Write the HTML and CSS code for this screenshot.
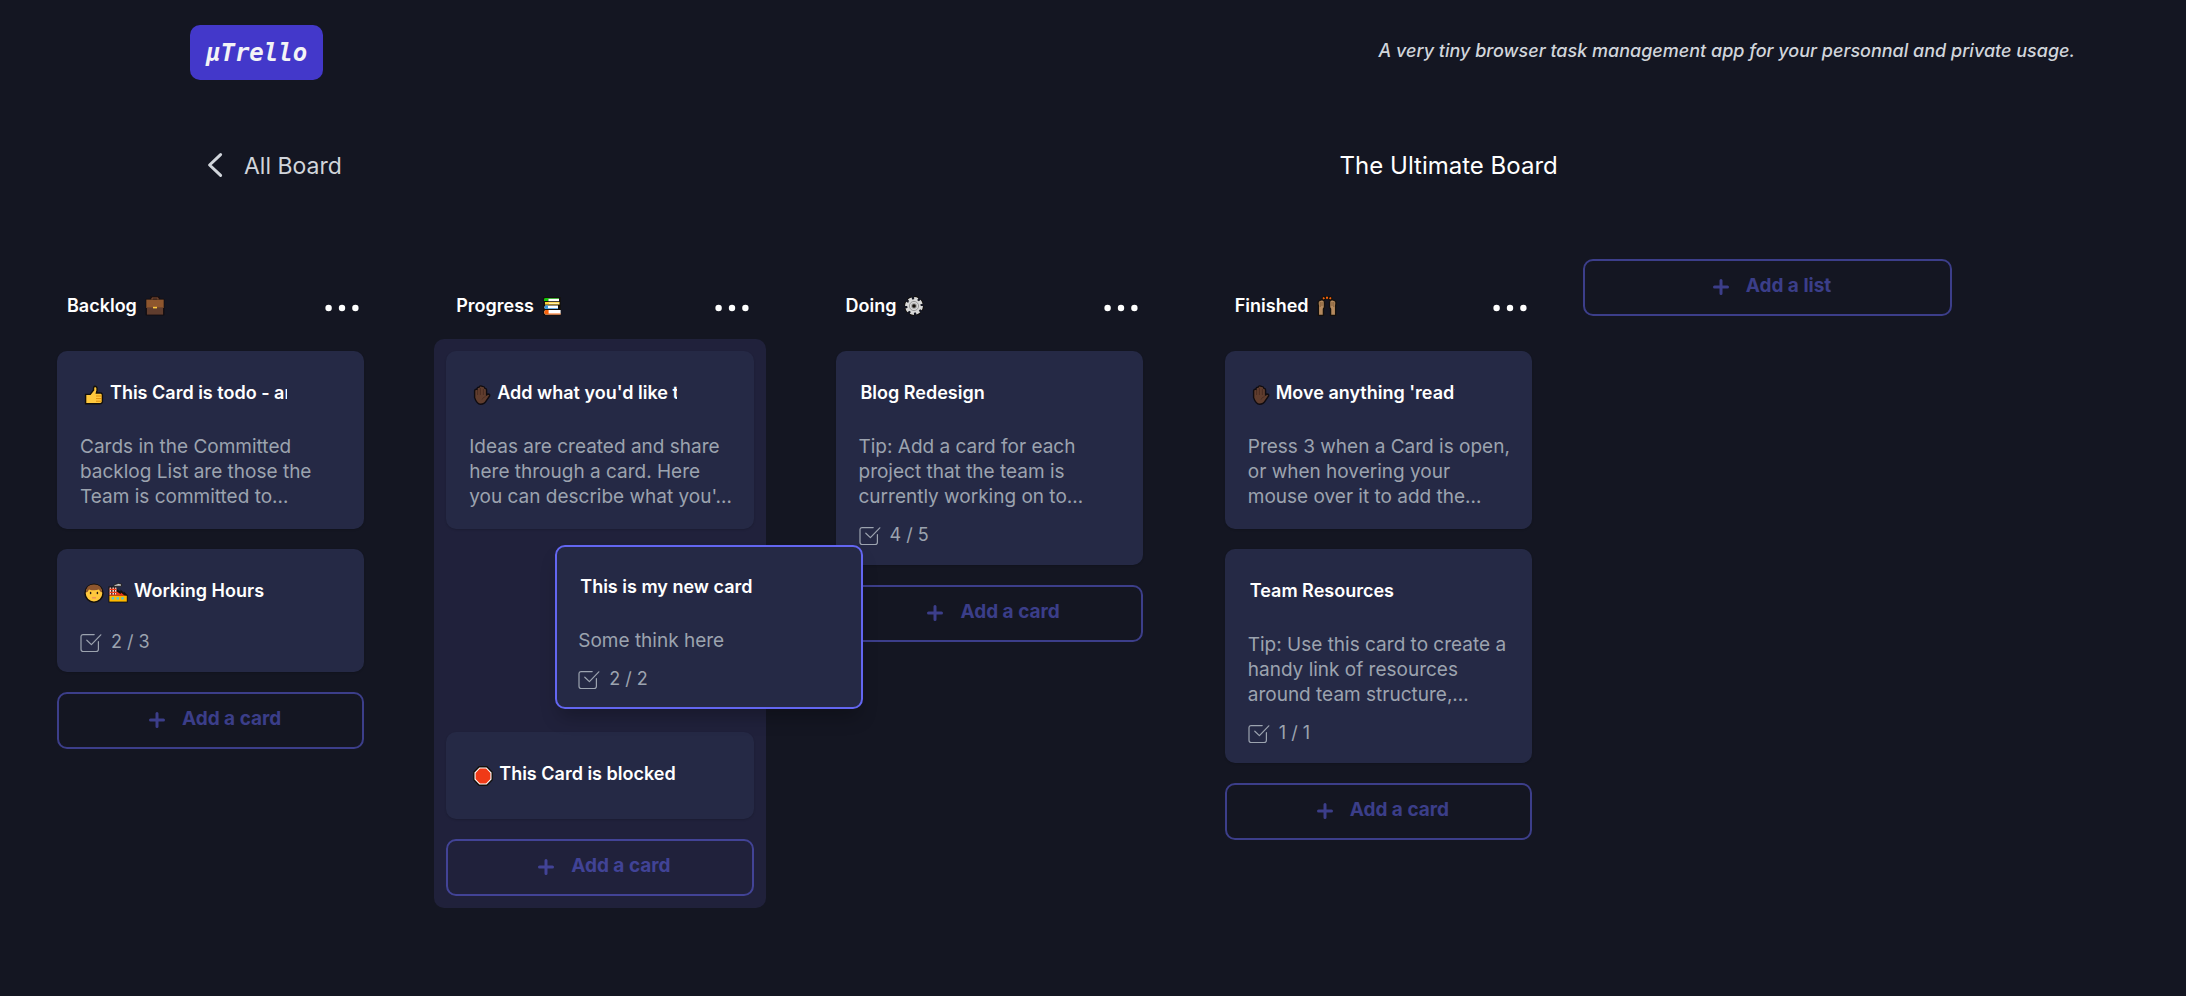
FILE: index.html
```html
<!DOCTYPE html>
<html lang="en">
<head>
<meta charset="utf-8">
<meta name="viewport" content="width=device-width, initial-scale=1">
<title>µTrello</title>
<link rel="stylesheet" href="styles.css">
</head>
<body>
<svg class="defs" aria-hidden="true">
  <symbol id="dots" viewBox="0 0 34 8"><circle cx="3.6" cy="4" r="3.2"/><circle cx="17" cy="4" r="3.2"/><circle cx="30.4" cy="4" r="3.2"/></symbol>
  <symbol id="plus" viewBox="0 0 16 16"><path d="M8 1.5v13M1.5 8h13" fill="none" stroke="currentColor" stroke-width="3" stroke-linecap="round"/></symbol>
  <symbol id="check" viewBox="0 0 22 20"><path d="M14.2 1.6H3.2Q1 1.6 1 3.8V16.3Q1 18.5 3.2 18.5H16.2Q18.4 18.5 18.4 16.3V8.7M6.8 7.2l4.6 4.4L20.8 1.8" fill="none" stroke="currentColor" stroke-width="1.2" stroke-linecap="round" stroke-linejoin="round"/></symbol>
  <symbol id="hand" viewBox="0 0 18 20"><path d="M1.6 12.6V5.4Q2.2 3.8 4 4.4Q4 2 6 2.2Q7.4 0 9.4 1.4Q11.6 1.4 12 3.4Q13.6 3.4 13.6 5.4v4.4l1.6-.8Q17 9 16.6 11l-3.2 4.6Q11.4 19.2 7.6 19.2T1.6 12.6z" fill="#603d2e" stroke="#100c10" stroke-width="1.4"/><path d="M4.6 5v5M7.4 3v7M10.4 4v6M9 14.6q1-2.6 3.6-3" fill="none" stroke="#452a20" stroke-width=".8"/></symbol>
</svg>

<header class="topbar">
  <a class="logo" href="#">µTrello</a>
  <p class="tagline">A very tiny browser task management app for your personnal and private usage.</p>
</header>

<nav class="boardbar">
  <a class="back" href="#">
    <svg class="chevron" viewBox="0 0 16 26" aria-hidden="true"><path d="M13.6 2.6L2.6 13L13.6 23.4" fill="none" stroke="currentColor" stroke-width="3" stroke-linecap="round" stroke-linejoin="round"/></svg>
    All Board
  </a>
  <h1 class="board-title">The Ultimate Board</h1>
</nav>

<main class="board">
  <div class="lists">
    <section class="list">
      <header class="list-head">
        <h2 class="list-title">Backlog
          <svg class="emoji" viewBox="0 0 20 20" role="img" aria-label="briefcase"><path d="M6.5 4V1.5h7V4" fill="none" stroke="#1b1110" stroke-width="2.6"/><rect x=".6" y="2.8" width="18.8" height="16.6" rx="1" fill="#100c10"/><path d="M7 3.6V2h6v1.6" fill="none" stroke="#8b5334"/><rect x="1.3" y="3.6" width="17.4" height="8.4" fill="#8e562e"/><rect x="1.9" y="11.4" width="16.2" height="7.2" fill="#603d2e"/><rect x="8" y="10.8" width="4" height="1.6" fill="#ffc83d"/></svg>
        </h2>
        <button class="menu" type="button" aria-label="Backlog menu"><svg class="dots"><use href="#dots"/></svg></button>
      </header>
      <div class="cards">
        <article class="card">
          <div class="card-head">
            <svg class="emoji" viewBox="0 0 20 20" role="img" aria-label="thumbs up"><path d="M1.6 9.4h4.6L9.6 5Q9.2 1.2 11 1.2Q13.6 1.6 13 5.4L12.4 8H17q1.6.6 1.4 2.2V17q-.6 1.8-2.4 1.8H1.6z" fill="#ffc83d" stroke="#14100c" stroke-width="1.4"/><path d="M12 11h6M12 13.6h6M12 16.2h5.4" stroke="#d67d00" stroke-width=".8"/></svg>
            <input class="card-title" aria-label="Card title" value="This Card is todo - and ready">
          </div>
          <p class="desc">Cards in the Committed<br>backlog List are those the<br>Team is committed to…</p>
        </article>
        <article class="card">
          <div class="card-head">
            <svg class="emoji" viewBox="0 0 20 20" role="img" aria-label="man"><circle cx="10" cy="10.2" r="9" fill="#ffc83d" stroke="#14100c" stroke-width="1.5"/><path d="M1.8 9.6Q2 1.4 10 1.4T18.2 9.6Q16 9 15 6.6Q10 8 5 6.4Q4 9 1.8 9.6z" fill="#8e562e"/><ellipse cx="6.6" cy="10" rx=".8" ry="1.2" fill="#2a1c14"/><ellipse cx="13.4" cy="10" rx=".8" ry="1.2" fill="#2a1c14"/><path d="M8 14.8h4" fill="none" stroke="#f08a5c" stroke-width="1.3"/></svg>
            <svg class="emoji" viewBox="0 0 20 20" role="img" aria-label="factory"><path d="M.5 3.6h8V6l4 2.6V6.4l3.4 3.4V8.6l3.8 3.6V19.4H.5z" fill="#14100c"/><path d="M5.8 3.4Q5.6 1 8.2 1.2Q10-.2 13.4 1V3.2H9z" fill="#cfcfcf" stroke="#14100c" stroke-width=".8"/><path d="M2.4 4.4V12M5.2 4.4V12M7.6 4.4V12" stroke="#ffd6d0" stroke-width="1.6"/><path d="M1.6 6.4h6.8M1.6 9.4h6.8" stroke="#f03a17" stroke-width="1.2"/><path d="M1.4 12.8V11.4h7V8.2l4.4 3V9.4l3.4 2.8 2.6.6z" fill="#f03a17"/><rect x="1.4" y="12.8" width="17.4" height="5.8" fill="#ffb900"/><path d="M3.6 15.4h2.6M8.4 15.4h2.6M13.2 15.4h2.6" stroke="#50c8d8" stroke-width="2.4"/></svg>
            <input class="card-title" aria-label="Card title" value="Working Hours">
          </div>
          <p class="progress"><svg class="check"><use href="#check"/></svg>2 / 3</p>
        </article>
        <button class="add" type="button"><svg class="plus"><use href="#plus"/></svg>Add a card</button>
      </div>
    </section>

    <section class="list">
      <header class="list-head">
        <h2 class="list-title">Progress
          <svg class="emoji" viewBox="0 0 20 20" role="img" aria-label="books"><path d="M1.4 1h17.2v18.4H1z" fill="#14100c"/><path d="M2 5V3.2Q2 2 3.6 2H17v.8H6.4V5z" fill="#16c60c"/><path d="M6.4 2.8H17V5.2H6.4z" fill="#fff"/><path d="M3 6h14.6v2.6H3z" fill="#ffd23c"/><path d="M7 6.8h10v1H7z" fill="#fff6c8"/><path d="M6 9.4H3.4q-2 1.8 0 3.6H16V9.4z" fill="#fff"/><path d="M6 9.4H3.4q-2 1.8 0 3.6H16v-.8H6z" fill="#3a96dd"/><path d="M6 14H3.4q-2.4 2.2 0 4.6H18.6V14z" fill="#fff"/><path d="M6.6 14H3.4q-2.4 2.2 0 4.6H18.6v-1.2H6.6z" fill="#f7630c"/></svg>
        </h2>
        <button class="menu" type="button" aria-label="Progress menu"><svg class="dots"><use href="#dots"/></svg></button>
      </header>
      <div class="cards is-over">
        <article class="card">
          <div class="card-head">
            <svg class="emoji hand" role="img" aria-label="raised hand"><use href="#hand"/></svg>
            <input class="card-title" aria-label="Card title" value="Add what you'd like to do">
          </div>
          <p class="desc">Ideas are created and share<br>here through a card. Here<br>you can describe what you'…</p>
        </article>
        <div class="slot">
          <article class="card is-dragged">
            <div class="card-head">
              <input class="card-title" aria-label="Card title" value="This is my new card">
            </div>
            <p class="desc">Some think here</p>
            <p class="progress"><svg class="check"><use href="#check"/></svg>2 / 2</p>
          </article>
        </div>
        <article class="card">
          <div class="card-head">
            <svg class="emoji" viewBox="0 0 20 20" role="img" aria-label="stop sign"><path d="M6.2.8h7.6l5.4 5.4v7.6l-5.4 5.4H6.2L.8 13.8V6.2z" fill="#fff" stroke="#14100c" stroke-width="1.4"/><path d="M6.9 2.6h6.2l4.3 4.3v6.2l-4.3 4.3H6.9l-4.3-4.3V6.9z" fill="#f03a17"/></svg>
            <input class="card-title" aria-label="Card title" value="This Card is blocked">
          </div>
        </article>
        <button class="add" type="button"><svg class="plus"><use href="#plus"/></svg>Add a card</button>
      </div>
    </section>

    <section class="list">
      <header class="list-head">
        <h2 class="list-title">Doing
          <svg class="emoji" viewBox="0 0 20 20" role="img" aria-label="gear"><circle cx="10" cy="10" r="7.4" fill="none" stroke="#14100c" stroke-width="5" stroke-dasharray="3.6 2.2"/><circle cx="10" cy="10" r="7.4" fill="none" stroke="#d8d8d8" stroke-width="3" stroke-dasharray="3.6 2.2"/><circle cx="10" cy="10" r="6.8" fill="#d8d8d8"/><circle cx="10" cy="10" r="4.6" fill="none" stroke="#8a8a8a" stroke-width=".8"/><circle cx="10" cy="10" r="2.8" fill="#9a9a9a"/><circle cx="10" cy="10" r="1.8" fill="#14100c"/></svg>
        </h2>
        <button class="menu" type="button" aria-label="Doing menu"><svg class="dots"><use href="#dots"/></svg></button>
      </header>
      <div class="cards">
        <article class="card">
          <div class="card-head">
            <input class="card-title" aria-label="Card title" value="Blog Redesign">
          </div>
          <p class="desc">Tip: Add a card for each<br>project that the team is<br>currently working on to…</p>
          <p class="progress"><svg class="check"><use href="#check"/></svg>4 / 5</p>
        </article>
        <button class="add" type="button"><svg class="plus"><use href="#plus"/></svg>Add a card</button>
      </div>
    </section>

    <section class="list">
      <header class="list-head">
        <h2 class="list-title">Finished
          <svg class="emoji" viewBox="0 0 20 20" role="img" aria-label="raising hands"><path id="arm" d="M1.4 19.4V10Q.4 5 2.4 4.6L4 3.8Q7.6 3.4 7.4 7v4.4L6.4 13v6.4z" fill="#b58a5e" stroke="#14100c" stroke-width="1.3"/><use href="#arm" transform="matrix(-1 0 0 1 20 0)"/><path d="M3.2 6v5M5 6v4M16.8 6v5M15 6v4" stroke="#7a5534" stroke-width=".8"/><path d="M5.4 3.2Q10-1 14.6 3.2" fill="none" stroke="#14100c" stroke-width="3.4"/><path d="M6 2.8l1.4-1M9 1.8h2M12.6 1.8l1.4 1" stroke="#f7630c" stroke-width="2"/></svg>
        </h2>
        <button class="menu" type="button" aria-label="Finished menu"><svg class="dots"><use href="#dots"/></svg></button>
      </header>
      <div class="cards">
        <article class="card">
          <div class="card-head">
            <svg class="emoji hand" role="img" aria-label="raised hand"><use href="#hand"/></svg>
            <input class="card-title" aria-label="Card title" value="Move anything 'ready' here">
          </div>
          <p class="desc">Press 3 when a Card is open,<br>or when hovering your<br>mouse over it to add the…</p>
        </article>
        <article class="card">
          <div class="card-head">
            <input class="card-title" aria-label="Card title" value="Team Resources">
          </div>
          <p class="desc">Tip: Use this card to create a<br>handy link of resources<br>around team structure,…</p>
          <p class="progress"><svg class="check"><use href="#check"/></svg>1 / 1</p>
        </article>
        <button class="add" type="button"><svg class="plus"><use href="#plus"/></svg>Add a card</button>
      </div>
    </section>
  </div>
  <button class="add" type="button"><svg class="plus"><use href="#plus"/></svg>Add a list</button>
</main>
</body>
</html>
```
FILE: styles.css
```css
* {
  box-sizing: border-box;
}

body {
  margin: 0;
  min-height: 100vh;
  background: #141622;
  color: #fff;
  font-family: Inter, "Liberation Sans", sans-serif;
  font-size: 18px;
  line-height: 25px;
}

h1,
h2,
p {
  margin: 0;
}

a {
  color: inherit;
  text-decoration: none;
}

button,
input {
  font: inherit;
}

.defs {
  display: none;
}

.topbar {
  display: flex;
  align-items: center;
  justify-content: space-between;
  padding: 25px 111px 0 190px;
}

.logo {
  display: flex;
  align-items: center;
  height: 55px;
  padding: 0 16px;
  border-radius: 10px;
  background: #4338ca;
  color: #f3f4f6;
  font: italic bold 24px "DejaVu Sans Mono", monospace;
}

.tagline {
  padding-bottom: 4px;
  color: #d1d5db;
  font-style: italic;
  font-weight: 500;
}

.boardbar {
  display: grid;
  grid-template-columns: 1fr 2fr;
  align-items: center;
  padding: 68px 108px 0 190px;
  font-size: 23px;
  line-height: 36px;
}

.back {
  display: flex;
  align-items: center;
  gap: 21px;
  padding-left: 17px;
  color: #d1d5db;
}

.chevron {
  width: 16px;
  height: 26px;
  margin-bottom: 2px;
}

.board-title {
  font-size: 24px;
  font-weight: 400;
  text-align: center;
}

.board {
  display: grid;
  grid-template-columns: minmax(0, 1499fr) minmax(0, 369fr);
  align-items: start;
  gap: 39px;
  padding: 75px 234px 40px 45px;
}

.lists {
  display: grid;
  grid-template-columns: repeat(4, minmax(0, 1fr));
  align-items: start;
  gap: 58px;
  padding-top: 28px;
}

.list-head {
  display: flex;
  align-items: center;
  justify-content: space-between;
  height: 40px;
  padding: 0 17px 3px 22px;
}

.list-title {
  display: flex;
  align-items: center;
  gap: 8px;
  font-size: 18px;
  font-weight: 600;
}

.emoji {
  flex: none;
  width: 20px;
  height: 20px;
}

.emoji.hand {
  width: 18px;
}

.menu {
  display: flex;
  padding: 4px 0 0;
  border: 0;
  background: none;
  color: #fff;
}

.dots {
  width: 34px;
  height: 8px;
  fill: currentColor;
}

.cards {
  display: flex;
  flex-direction: column;
  gap: 20px;
  margin-top: 12px;
  padding: 12px;
  border-radius: 10px;
}

.cards.is-over {
  background: #20213b;
}

.card {
  padding: 20px 23px;
  border-radius: 10px;
  background: #252945;
  box-shadow: 0 1px 2px rgba(0, 0, 0, 0.15);
}

.card-head {
  display: flex;
  align-items: center;
  gap: 4px;
  height: 47px;
  margin-right: 54px;
  padding-left: 2px;
}

.card-head .emoji:first-child {
  margin-left: 2px;
}

.card-title {
  flex: 1;
  min-width: 0;
  height: 30px;
  padding: 0 0 4px;
  border: 0;
  outline: 0;
  background: none;
  color: #fff;
  font-weight: 600;
}

.emoji + .card-title {
  margin-left: 2px;
}

.desc {
  margin-top: 16px;
  color: #9ca3af;
  font-size: 19px;
  white-space: nowrap;
}

.progress {
  display: flex;
  align-items: center;
  gap: 9px;
  height: 22px;
  margin-top: 14px;
  color: #9ca3af;
}

.check {
  width: 22px;
  height: 20px;
  margin-top: 3px;
}

.slot {
  position: relative;
  height: 163px;
}

/* The card in hand floats over the neighbouring list. */
.is-dragged {
  position: absolute;
  z-index: 1;
  top: -4px;
  left: 109px;
  width: 100%;
  padding: 18px 21px;
  border: 2px solid #6366f1;
  box-shadow: 0 12px 18px -4px rgba(0, 0, 0, 0.25);
}

.add {
  display: flex;
  align-items: center;
  justify-content: center;
  gap: 17px;
  height: 57px;
  padding: 0 0 4px 9px;
  border: 2px solid rgba(99, 102, 241, 0.5);
  border-radius: 10px;
  background: none;
  color: rgba(99, 102, 241, 0.5);
  font-size: 19px;
  font-weight: 700;
}

.plus {
  width: 16px;
  height: 16px;
  margin-top: 3px;
}
```
